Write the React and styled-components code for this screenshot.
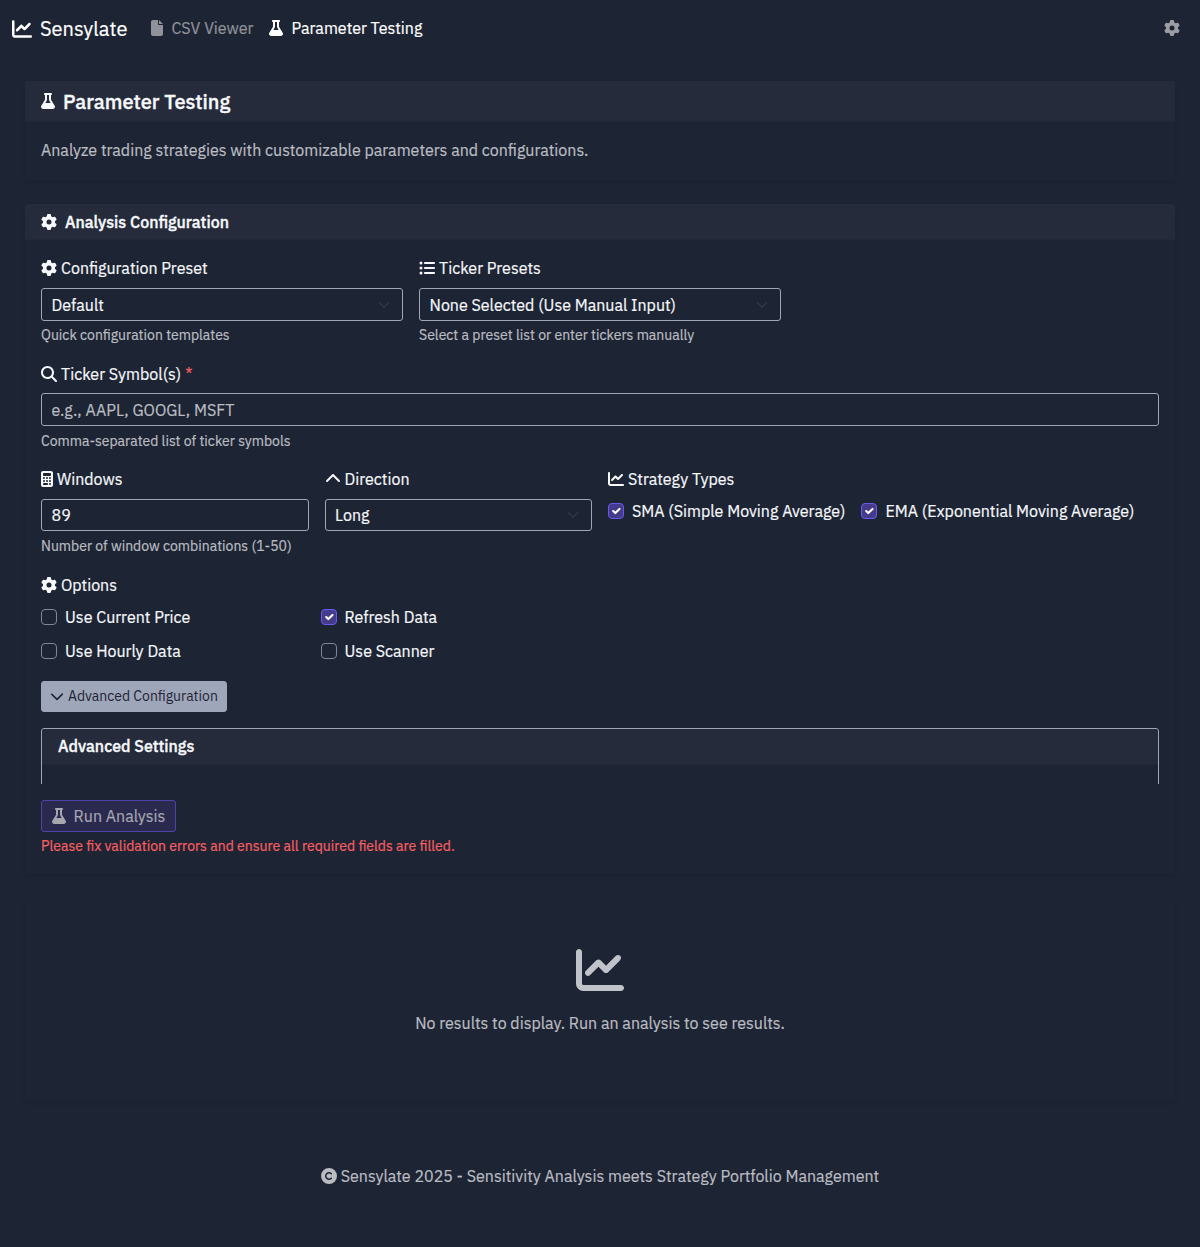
import React from "react";
import styled, { createGlobalStyle, css } from "styled-components";
import {
  FaChartLine,
  FaFile,
  FaFlask,
  FaGear,
  FaListUl,
  FaMagnifyingGlass,
  FaCalculator,
  FaChevronUp,
  FaChevronDown,
  FaCopyright,
} from "react-icons/fa6";

const color = {
  bg: "#1d2433",
  header: "#252b3a",
  text: "#f6f8fc",
  muted: "#babcc2",
  border: "#9ea6ba",
  danger: "#f95e63",
};

const GlobalStyle = createGlobalStyle`
  *, *::before, *::after { box-sizing: border-box; }
  body {
    margin: 0;
    background: ${color.bg};
    color: ${color.text};
    font-family: "IBM Plex Sans", Roboto, "Liberation Sans", sans-serif;
    font-size: 16px;
    line-height: 24px;
    -webkit-text-stroke: 0.2px currentColor;
  }
  svg { display: block; flex: none; }
`;

const FlaskIcon = styled(FaFlask)`
  width: 0.875em;
`;

const FileIcon = styled(FaFile)`
  width: 0.75em;
`;

const CalculatorIcon = styled(FaCalculator)`
  width: 0.75em;
`;

const Page = styled.div`
  min-height: 1247px;
  display: flex;
  flex-direction: column;
`;

const Navbar = styled.nav`
  display: flex;
  align-items: center;
  height: 56px;
  padding: 0 20px 0 12px;
`;

const Brand = styled.a`
  display: flex;
  align-items: center;
  gap: 8px;
  margin-right: 24px;
  padding-top: 1px;
  color: #fff;
  font-size: 20px;
  line-height: 30px;
`;

const NavLink = styled.a`
  display: flex;
  align-items: center;
  gap: 8px;
  margin-right: 16px;
  color: ${(p) => (p.$active ? "#fff" : "#8f929a")};
`;

const SettingsButton = styled.a`
  margin-left: auto;
  color: #9b9ea6;
`;

const Main = styled.main`
  display: flex;
  flex-direction: column;
  gap: 24px;
  padding: 25px 25px 0;
`;

const Card = styled.section`
  border-radius: 3px;
  box-shadow: 0 2px 4px rgba(0, 0, 0, 0.09);
`;

const CardHeader = styled.header`
  display: flex;
  align-items: center;
  gap: 8px;
  height: ${(p) => (p.$large ? 41 : 36)}px;
  padding: 0 16px;
  border-radius: 3px 3px 0 0;
  background: ${color.header};
  border-bottom: 1px solid #222837;
`;

const PageTitle = styled.h1`
  margin: 0;
  padding-top: 2px;
  font-size: 20px;
  font-weight: 500;
  line-height: 24px;
  -webkit-text-stroke-width: 0.35px;
`;

const SectionTitle = styled.h2`
  margin: 0;
  padding-top: ${(p) => (p.$nested ? 0 : 1)}px;
  font-size: 16px;
  font-weight: 500;
  line-height: 24px;
  -webkit-text-stroke-width: 0.35px;
`;

const IntroBody = styled.p`
  margin: 0;
  padding: 16px 16px 18px;
  color: ${color.muted};
`;

const Form = styled.form`
  display: flex;
  flex-direction: column;
  padding: 16px 16px 17px;
`;

const FieldRow = styled.div`
  display: grid;
  grid-template-columns: repeat(12, 1fr);
  gap: 16px;
  height: 105.4px;
`;

const Field = styled.div`
  grid-column: span ${(p) => p.$span};
`;

const Label = styled.label`
  display: flex;
  align-items: center;
  gap: 4px;
  height: 24px;
  margin-bottom: 8px;
  padding-top: 0.4px;
`;

const OptionsLabel = styled(Label)`
  margin-top: 0.4px;
`;

const Required = styled.span`
  color: ${color.danger};
`;

const control = css`
  display: flex;
  align-items: center;
  width: 100%;
  height: 32.6px;
  padding: 0.6px 10px 0 9.6px;
  border: 1px solid ${color.border};
  border-radius: 3px;
  background: transparent;
  color: ${color.text};
  font: inherit;
  outline: 0;
`;

const TextInput = styled.input`
  ${control}
  &::placeholder {
    color: ${color.muted};
    opacity: 1;
  }
`;

const SelectBox = styled.div`
  ${control}
  justify-content: space-between;
  svg {
    width: 16px;
    height: 12px;
    color: #30364a;
  }
`;

const Help = styled.div`
  margin-top: 4.6px;
  color: ${color.muted};
  font-size: 14px;
  line-height: 21px;
`;

const ErrorText = styled.div`
  margin-top: 4px;
  color: ${color.danger};
  font-size: 14px;
  line-height: 21px;
`;

const Inline = styled.div`
  display: flex;
  gap: 16px;
`;

const OptionGrid = styled.div`
  display: grid;
  grid-template-columns: repeat(4, 1fr);
  row-gap: 10px;
  margin-bottom: 18px;
  & > :nth-child(odd) {
    grid-column: 1;
  }
`;

const CheckLabel = styled.label`
  display: flex;
  align-items: center;
  gap: 8px;
  white-space: nowrap;
`;

const Box = styled.span`
  display: grid;
  place-items: center;
  width: 16px;
  height: 16px;
  border: 1px solid ${(p) => (p.$checked ? "#6c59ee" : "#7f8698")};
  border-radius: 4px;
  background: ${(p) => (p.$checked ? "#443b8c" : "transparent")};
  color: #fff;
  svg {
    width: 14px;
    height: 14px;
  }
`;

const ToggleButton = styled.button`
  display: flex;
  align-items: center;
  align-self: flex-start;
  gap: 4px;
  height: 31px;
  margin: 0 0 16px;
  padding: 0 8px;
  border: 1px solid #9ea6ba;
  border-radius: 3px;
  background: #9ea6ba;
  color: #1e2433;
  font: inherit;
  font-size: 14px;
  -webkit-text-stroke-width: 0;
`;

const AdvancedPanel = styled.div`
  height: 56px;
  margin-bottom: 16px;
  overflow: hidden;
`;

const AdvancedCard = styled.div`
  height: 120px;
  border: 1px solid ${color.border};
  border-radius: 3px;
`;

const RunButton = styled.button`
  display: flex;
  align-items: center;
  align-self: flex-start;
  gap: 8px;
  height: 32.5px;
  padding: 1px 9.6px 0;
  border: 1px solid #4e43ab;
  border-radius: 3px;
  background: #2a294e;
  color: #a5a6b0;
  font: inherit;
`;

const EmptyCard = styled(Card)`
  display: flex;
  flex-direction: column;
  align-items: center;
  gap: 17px;
  height: 203px;
  padding-top: 48px;
  color: ${color.muted};
  svg {
    font-size: 48px;
    color: #c0c3ca;
  }
`;

const Footer = styled.footer`
  display: flex;
  align-items: center;
  justify-content: center;
  gap: 4px;
  margin-top: 63px;
  color: ${color.muted};
`;

function SelectChevron() {
  return (
    <svg viewBox="0 0 16 16" fill="none" stroke="currentColor" strokeWidth="2" strokeLinecap="round" strokeLinejoin="round">
      <path d="m2 5 6 6 6-6" />
    </svg>
  );
}

function Select({ value }) {
  return (
    <SelectBox role="combobox">
      <span>{value}</span>
      <SelectChevron />
    </SelectBox>
  );
}

function Checkbox({ label, checked }) {
  return (
    <CheckLabel>
      <Box $checked={checked}>
        {checked && (
          <svg viewBox="0 0 20 20" fill="none" stroke="currentColor" strokeWidth="3" strokeLinecap="round" strokeLinejoin="round">
            <path d="m6 10 3 3 6-6" />
          </svg>
        )}
      </Box>
      <span>{label}</span>
    </CheckLabel>
  );
}

export default function App() {
  return (
    <Page>
      <GlobalStyle />
      <Navbar>
        <Brand>
          <FaChartLine />
          Sensylate
        </Brand>
        <NavLink>
          <FileIcon />
          CSV Viewer
        </NavLink>
        <NavLink $active>
          <FlaskIcon />
          Parameter Testing
        </NavLink>
        <SettingsButton>
          <FaGear />
        </SettingsButton>
      </Navbar>

      <Main>
        <Card>
          <CardHeader $large>
            <FlaskIcon />
            <PageTitle>Parameter Testing</PageTitle>
          </CardHeader>
          <IntroBody>Analyze trading strategies with customizable parameters and configurations.</IntroBody>
        </Card>

        <Card>
          <CardHeader>
            <FaGear />
            <SectionTitle>Analysis Configuration</SectionTitle>
          </CardHeader>
          <Form>
            <FieldRow>
              <Field $span={4}>
                <Label>
                  <FaGear />
                  Configuration Preset
                </Label>
                <Select value="Default" />
                <Help>Quick configuration templates</Help>
              </Field>
              <Field $span={4}>
                <Label>
                  <FaListUl />
                  Ticker Presets
                </Label>
                <Select value="None Selected (Use Manual Input)" />
                <Help>Select a preset list or enter tickers manually</Help>
              </Field>
            </FieldRow>

            <FieldRow>
              <Field $span={12}>
                <Label>
                  <FaMagnifyingGlass />
                  Ticker Symbol(s)
                  <Required>*</Required>
                </Label>
                <TextInput placeholder="e.g., AAPL, GOOGL, MSFT" />
                <Help>Comma-separated list of ticker symbols</Help>
              </Field>
            </FieldRow>

            <FieldRow>
              <Field $span={3}>
                <Label>
                  <CalculatorIcon />
                  Windows
                </Label>
                <TextInput defaultValue="89" />
                <Help>Number of window combinations (1-50)</Help>
              </Field>
              <Field $span={3}>
                <Label>
                  <FaChevronUp />
                  Direction
                </Label>
                <Select value="Long" />
              </Field>
              <Field $span={6}>
                <Label>
                  <FaChartLine />
                  Strategy Types
                </Label>
                <Inline>
                  <Checkbox label="SMA (Simple Moving Average)" checked />
                  <Checkbox label="EMA (Exponential Moving Average)" checked />
                </Inline>
              </Field>
            </FieldRow>

            <OptionsLabel>
              <FaGear />
              Options
            </OptionsLabel>
            <OptionGrid>
              <Checkbox label="Use Current Price" />
              <Checkbox label="Refresh Data" checked />
              <Checkbox label="Use Hourly Data" />
              <Checkbox label="Use Scanner" />
            </OptionGrid>

            <ToggleButton type="button">
              <FaChevronDown />
              Advanced Configuration
            </ToggleButton>

            <AdvancedPanel>
              <AdvancedCard>
                <CardHeader>
                  <SectionTitle $nested>Advanced Settings</SectionTitle>
                </CardHeader>
              </AdvancedCard>
            </AdvancedPanel>

            <RunButton type="button">
              <FlaskIcon />
              Run Analysis
            </RunButton>
            <ErrorText>Please fix validation errors and ensure all required fields are filled.</ErrorText>
          </Form>
        </Card>

        <EmptyCard>
          <FaChartLine />
          <span>No results to display. Run an analysis to see results.</span>
        </EmptyCard>
      </Main>

      <Footer>
        <FaCopyright />
        <span>Sensylate 2025 - Sensitivity Analysis meets Strategy Portfolio Management</span>
      </Footer>
    </Page>
  );
}
